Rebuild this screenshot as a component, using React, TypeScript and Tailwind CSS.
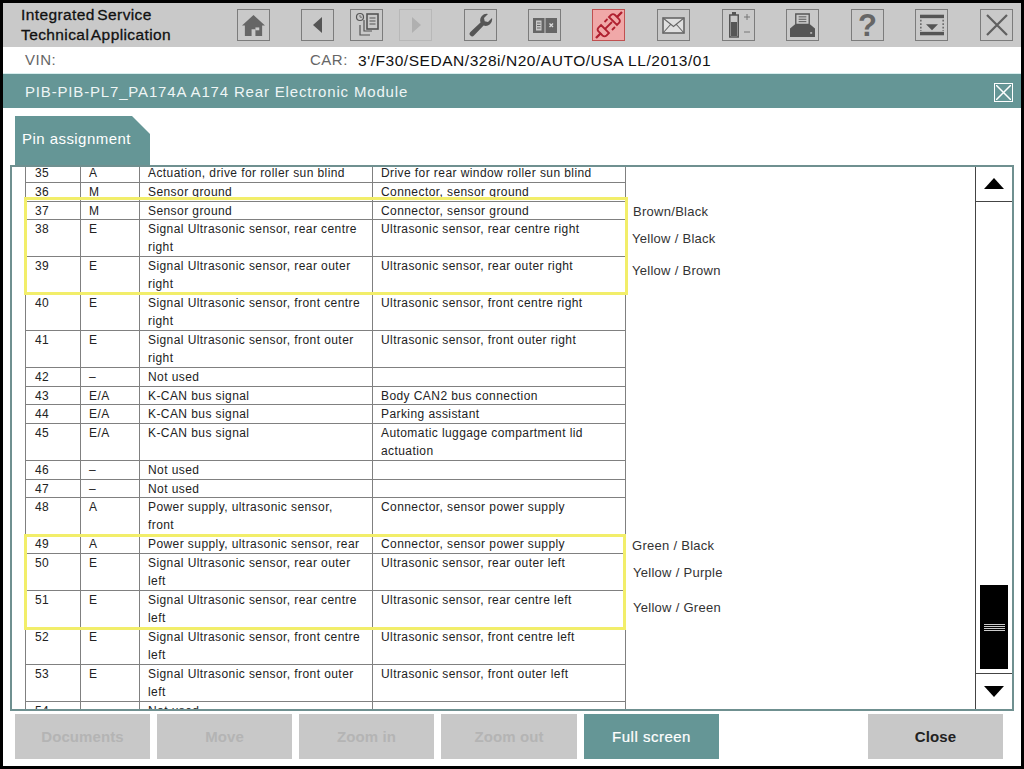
import React from 'react';

type Row = { pin: string; type: string; desc: string[]; conn: string[] };

const rows: Row[] = [
  { pin: '35', type: 'A', desc: ['Actuation, drive for roller sun blind'], conn: ['Drive for rear window roller sun blind'] },
  { pin: '36', type: 'M', desc: ['Sensor ground'], conn: ['Connector, sensor ground'] },
  { pin: '37', type: 'M', desc: ['Sensor ground'], conn: ['Connector, sensor ground'] },
  { pin: '38', type: 'E', desc: ['Signal Ultrasonic sensor, rear centre', 'right'], conn: ['Ultrasonic sensor, rear centre right'] },
  { pin: '39', type: 'E', desc: ['Signal Ultrasonic sensor, rear outer', 'right'], conn: ['Ultrasonic sensor, rear outer right'] },
  { pin: '40', type: 'E', desc: ['Signal Ultrasonic sensor, front centre', 'right'], conn: ['Ultrasonic sensor, front centre right'] },
  { pin: '41', type: 'E', desc: ['Signal Ultrasonic sensor, front outer', 'right'], conn: ['Ultrasonic sensor, front outer right'] },
  { pin: '42', type: '–', desc: ['Not used'], conn: [] },
  { pin: '43', type: 'E/A', desc: ['K-CAN bus signal'], conn: ['Body CAN2 bus connection'] },
  { pin: '44', type: 'E/A', desc: ['K-CAN bus signal'], conn: ['Parking assistant'] },
  { pin: '45', type: 'E/A', desc: ['K-CAN bus signal'], conn: ['Automatic luggage compartment lid', 'actuation'] },
  { pin: '46', type: '–', desc: ['Not used'], conn: [] },
  { pin: '47', type: '–', desc: ['Not used'], conn: [] },
  { pin: '48', type: 'A', desc: ['Power supply, ultrasonic sensor,', 'front'], conn: ['Connector, sensor power supply'] },
  { pin: '49', type: 'A', desc: ['Power supply, ultrasonic sensor, rear'], conn: ['Connector, sensor power supply'] },
  { pin: '50', type: 'E', desc: ['Signal Ultrasonic sensor, rear outer', 'left'], conn: ['Ultrasonic sensor, rear outer left'] },
  { pin: '51', type: 'E', desc: ['Signal Ultrasonic sensor, rear centre', 'left'], conn: ['Ultrasonic sensor, rear centre left'] },
  { pin: '52', type: 'E', desc: ['Signal Ultrasonic sensor, front centre', 'left'], conn: ['Ultrasonic sensor, front centre left'] },
  { pin: '53', type: 'E', desc: ['Signal Ultrasonic sensor, front outer', 'left'], conn: ['Ultrasonic sensor, front outer left'] },
  { pin: '54', type: '–', desc: ['Not used'], conn: [] },
];

const ToolButton: React.FC<{ children: React.ReactNode; active?: boolean; disabled?: boolean; className?: string }> = ({ children, active, disabled, className }) => (
  <div
    className={`w-[33px] h-[32px] shrink-0 flex items-center justify-center border ${
      active ? 'border-[#c05050] bg-[#f0a8a8]' : disabled ? 'border-[#b8b8b8]' : 'border-[#7c7c7c]'
    } ${className ?? ''}`}
  >
    {children}
  </div>
);

const Line: React.FC<{ lines: string[] }> = ({ lines }) => (
  <>
    {lines.map((l) => (
      <div key={l} className="whitespace-nowrap">{l}</div>
    ))}
  </>
);

const TableRow: React.FC<{ row: Row }> = ({ row }) => (
  <div className={`grid grid-cols-[55px_59px_233px_253px] border-b border-[#808080] ${row.desc.length > 1 || row.conn.length > 1 ? 'h-[36.9px]' : 'h-[18.7px]'}`}>
    <div className="pl-[9px] border-r border-[#808080]">{row.pin}</div>
    <div className="pl-[8px] border-r border-[#808080]">{row.type}</div>
    <div className="pl-[8px] border-r border-[#808080]"><Line lines={row.desc} /></div>
    <div className="pl-[8px] border-r border-[#808080]"><Line lines={row.conn} /></div>
  </div>
);

const BottomButton: React.FC<{ label: string; variant?: 'off' | 'teal' | 'on'; className?: string }> = ({ label, variant = 'off', className }) => (
  <div
    className={`w-[135px] h-[45px] pt-[1px] flex items-center justify-center text-[15px] ${
      variant === 'teal'
        ? 'bg-[#659696] text-white tracking-[0.5px] [-webkit-text-stroke:0.2px_white]'
        : variant === 'on'
          ? 'bg-[#c8c8c8] text-[#222] font-bold tracking-[0.1px]'
          : 'bg-[#c8c8c8] text-[#b4b4b4] font-bold tracking-[0.1px]'
    } ${className ?? ''}`}
  >
    {label}
  </div>
);

const Note: React.FC<{ className: string; children: string }> = ({ className, children }) => (
  <div className={`absolute text-[13px] leading-[18px] tracking-[0.28px] text-[#333] whitespace-nowrap ${className}`}>{children}</div>
);

export default function App() {
  return (
    <div className="w-[1024px] h-[769px] box-border border-[3px] border-black bg-white flex flex-col overflow-hidden font-['Liberation_Sans',Arial,sans-serif]">
      {/* Toolbar */}
      <div className="h-[44px] shrink-0 bg-[#c9c9c9] flex items-center pl-[18px]">
        <div className="w-[216px] shrink-0 text-[15.5px] leading-[20px] text-[#111] tracking-[0.4px] [word-spacing:-2.2px] [-webkit-text-stroke:0.3px_#111]">
          <div>Integrated Service</div>
          <div>Technical Application</div>
        </div>
        <ToolButton>
          <svg width="25" height="23" viewBox="0 0 26 24" fill="#666">
            <path d="M13 1 L25 12 L22 12 L22 23 L15 23 L15 16 L11 16 L11 23 L4 23 L4 12 L1 12 Z" />
            <rect x="15" y="14" width="4" height="3" fill="#c9c9c9" />
          </svg>
        </ToolButton>
        <ToolButton className="ml-[31px]">
          <svg width="10" height="16" viewBox="0 0 10 16" fill="#555"><path d="M9 0 L9 16 L0 8 Z" /></svg>
        </ToolButton>
        <ToolButton className="ml-[16px]">
          <svg width="28" height="28" viewBox="0 0 28 28" fill="none" stroke="#555" strokeWidth="1.2">
            <circle cx="7" cy="6" r="3.5" />
            <path d="M7 4v2.2h2" strokeWidth="0.8" />
            <rect x="14" y="3" width="11" height="15" strokeWidth="1.6" />
            <path d="M16.5 7h6M16.5 10h6M16.5 13h6" />
            <path d="M11 9v11h8M7 14v10h10" />
          </svg>
        </ToolButton>
        <ToolButton disabled className="ml-[16px]">
          <svg width="10" height="16" viewBox="0 0 10 16" fill="#b0b0b0"><path d="M1 0 L1 16 L10 8 Z" /></svg>
        </ToolButton>
        <ToolButton className="ml-[32px]">
          <svg width="24" height="24" viewBox="0 0 24 24" fill="#555">
            <path d="M23 5 A6.5 6.5 0 0 1 14.6 12.5 L5 22.6 A2.3 2.3 0 0 1 1.4 19 L11.5 9.4 A6.5 6.5 0 0 1 19 1 L15 5 L15.7 8.3 L19 9 Z" />
          </svg>
        </ToolButton>
        <ToolButton className="ml-[31px]">
          <svg width="24" height="15" viewBox="0 0 24 15">
            <rect x="0" y="0" width="11.5" height="15" fill="#666" />
            <rect x="3" y="2.5" width="5.5" height="10" fill="#c9c9c9" />
            <path d="M4 5h3.5M4 7.5h3.5M4 10h3.5" stroke="#666" strokeWidth="1" />
            <rect x="12.5" y="0" width="11.5" height="15" fill="#666" />
            <path d="M16.5 5.5l3.5 3.5M20 5.5L16.5 9" stroke="#d8d8d8" strokeWidth="1.4" />
          </svg>
        </ToolButton>
        <ToolButton active className="ml-[31px]">
          <svg width="30" height="30" viewBox="0 0 30 30" fill="none" stroke="#b02030" strokeWidth="1.8">
            <path d="M2 28l5-5M28 2l-5 5" strokeWidth="2.4" />
            <path d="M7 15l8 8-2.5 2.5a3 3 0 0 1-4 0l-4-4a3 3 0 0 1 0-4z" />
            <path d="M15 7l8 8 2-2a3 3 0 0 0 0-4l-4-4a3 3 0 0 0-4 0z" />
            <path d="M11 19l4-4M15 15l3-3" />
            <path d="M10.5 12l3-3M18 20l3-3" />
          </svg>
        </ToolButton>
        <ToolButton className="ml-[32px]">
          <svg width="23" height="17" viewBox="0 0 23 17" fill="none" stroke="#666" strokeWidth="1.6">
            <rect x="1" y="1" width="21" height="15" fill="#e0e0e0" />
            <path d="M1 1l10.5 8.5L22 1M1 16l8-9M22 16l-8-9" strokeWidth="1.1" />
          </svg>
        </ToolButton>
        <ToolButton className="ml-[32px]">
          <svg width="28" height="26" viewBox="0 0 28 26">
            <rect x="7" y="0" width="4" height="3" fill="#555" />
            <rect x="4.75" y="3" width="8.5" height="22" fill="none" stroke="#555" strokeWidth="1.5" />
            <rect x="6" y="10" width="6" height="14" fill="#555" />
            <path d="M19 5h6M22 2v6M19 20h6" stroke="#777" strokeWidth="1" />
          </svg>
        </ToolButton>
        <ToolButton className="ml-[31px]">
          <svg width="27" height="25" viewBox="0 0 28 26">
            <path d="M7 1h14v11H7z" fill="none" stroke="#555" strokeWidth="1.4" />
            <path d="M10 4h8M10 6.5h8M10 9h8" stroke="#555" strokeWidth="1" />
            <path d="M6 12h16l5 4v9H1v-9z" fill="#555" />
            <rect x="22" y="20" width="2" height="1.5" fill="#c9c9c9" />
          </svg>
        </ToolButton>
        <ToolButton className="ml-[32px]">
          <span className="text-[31px] leading-none font-bold text-[#666]">?</span>
        </ToolButton>
        <ToolButton className="ml-[31px]">
          <svg width="24" height="22" viewBox="0 0 28 24">
            <rect x="0" y="0" width="28" height="4" fill="#555" />
            <rect x="0" y="20" width="28" height="4" fill="#555" />
            <path d="M7 11h14l-7 7z" fill="#555" />
            <path d="M1 6v13M27 6v13" stroke="#555" strokeWidth="1.5" strokeDasharray="2 2" />
          </svg>
        </ToolButton>
        <ToolButton className="ml-[32px]">
          <svg width="24" height="24" viewBox="0 0 24 24" stroke="#606060" strokeWidth="2.2"><path d="M2 2l20 20M22 2L2 22" /></svg>
        </ToolButton>
      </div>

      {/* Vehicle line */}
      <div className="h-[26px] pt-[1px] shrink-0 flex items-center text-[15px] tracking-[0.5px] bg-white">
        <div className="w-[307px] pl-[22px] text-[#666]">VIN:</div>
        <div className="w-[48px] text-[#666]">CAR:</div>
        <div className="text-[15.5px] text-[#111] tracking-[0.54px]">3'/F30/SEDAN/328i/N20/AUTO/USA LL/2013/01</div>
      </div>

      {/* Title bar */}
      <div className="h-[35px] pt-[2px] shrink-0 bg-[#659696] flex items-center justify-between pl-[22px] pr-[8px] text-[15px] tracking-[0.83px] text-[#eef5f5] border-t border-[#d8eeee]">
        <span>PIB-PIB-PL7_PA174A A174 Rear Electronic Module</span>
        <div className="w-[19px] h-[19px] border border-white flex items-center justify-center">
          <svg width="15" height="15" viewBox="0 0 15 15" stroke="white" strokeWidth="1.5"><path d="M0 0l15 15M15 0L0 15" /></svg>
        </div>
      </div>

      {/* Tab strip */}
      <div className="h-[57px] shrink-0 flex items-end pl-[12px]">
        <div className="w-[135px] h-[49px] bg-[#659696] text-white text-[15px] tracking-[0.45px] pl-[7px] pt-[12px] [clip-path:polygon(0_0,117px_0,100%_18px,100%_100%,0_100%)]">
          Pin assignment
        </div>
      </div>

      {/* Document frame */}
      <div className="mx-[7px] w-[1004px] h-[546px] shrink-0 box-border border-2 border-[#6f9090] flex relative overflow-hidden">
        <div className="flex-1 pl-[13px] overflow-hidden">
          <div className="-mt-[2.6px] w-[601px] border-l border-[#808080] text-[12px] leading-[18px] tracking-[0.42px] text-[#222]">
            {rows.map((r) => (
              <TableRow key={r.pin} row={r} />
            ))}
          </div>
        </div>

        {/* Scrollbar */}
        <div className="w-[37px] shrink-0 border-l border-[#444] flex flex-col">
          <div className="h-[35px] border-b border-[#444] pb-[2px] flex items-center justify-center">
            <svg width="20" height="11" viewBox="0 0 20 11" fill="black"><path d="M10 0l10 11H0z" /></svg>
          </div>
          <div className="flex-1 flex flex-col justify-end px-[4px] pb-[4px]">
            <div className="h-[84px] bg-black flex flex-col items-center justify-center gap-[1px]">
              <div className="w-[21px] h-[1px] bg-[#ccc]" />
              <div className="w-[21px] h-[1px] bg-[#ccc]" />
              <div className="w-[21px] h-[1px] bg-[#ccc]" />
              <div className="w-[21px] h-[1px] bg-[#ccc]" />
            </div>
          </div>
          <div className="h-[36px] border-t border-[#444] flex items-center justify-center">
            <svg width="20" height="11" viewBox="0 0 20 11" fill="black"><path d="M0 0h20L10 11z" /></svg>
          </div>
        </div>

        {/* Hand-drawn highlights and wire colours on top of the document */}
        <div className="absolute left-[12px] top-[30px] w-[604px] h-[98px] border-[3px] border-[#f2ee6a]" />
        <div className="absolute left-[12px] top-[367px] w-[602px] h-[96px] border-[3px] border-[#f2ee6a]" />
        <Note className="left-[621px] top-[36px]">Brown/Black</Note>
        <Note className="left-[620px] top-[63px]">Yellow / Black</Note>
        <Note className="left-[620px] top-[95px]">Yellow / Brown</Note>
        <Note className="left-[620px] top-[370px]">Green / Black</Note>
        <Note className="left-[621px] top-[397px]">Yellow / Purple</Note>
        <Note className="left-[621px] top-[432px]">Yellow / Green</Note>
      </div>

      {/* Bottom buttons */}
      <div className="flex-1 flex items-start pt-[3px] pl-[12px] gap-[7px]">
        <BottomButton label="Documents" />
        <BottomButton label="Move" />
        <BottomButton label="Zoom in" />
        <BottomButton label="Zoom out" className="w-[136px]" />
        <BottomButton label="Full screen" variant="teal" />
        <BottomButton label="Close" variant="on" className="ml-[142px]" />
      </div>
    </div>
  );
}
